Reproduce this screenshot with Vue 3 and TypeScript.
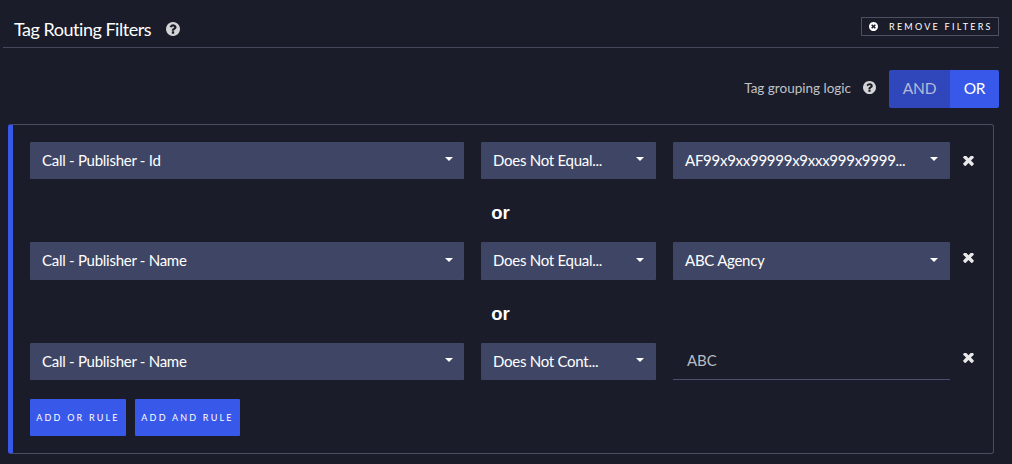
<script setup lang="ts">
interface Rule {
  field: string
  op: string
  value: string
  isInput?: boolean
  removeClass: string
}

const rules: Rule[] = [
  { field: 'Call - Publisher - Id', op: 'Does Not Equal...', value: 'AF99x9xx99999x9xxx999x9999...', removeClass: 'low' },
  { field: 'Call - Publisher - Name', op: 'Does Not Equal...', value: 'ABC Agency', removeClass: 'high' },
  { field: 'Call - Publisher - Name', op: 'Does Not Cont...', value: 'ABC', isInput: true, removeClass: 'high' },
]

const helpPath =
  'M1024 1376v-192q0-14-9-23t-23-9h-192q-14 0-23 9t-9 23v192q0 14 9 23t23 9h192q14 0 23-9t9-23zm256-672q0-88-55.5-163t-138.5-116-170-41q-243 0-371 213-15 24 8 42l132 100q7 6 19 6 16 0 25-12 53-68 86-92 34-24 86-24 48 0 85.5 26t37.5 59q0 38-20 61t-68 45q-63 28-115.5 86.5t-52.5 125.5v36q0 14 9 23t23 9h192q14 0 23-9t9-23q0-19 21.5-49.5t54.5-49.5q32-18 49-28.5t46-35 44.5-48 28-60.5 12.5-81zm384 192q0 209-103 385.5t-279.5 279.5-385.5 103-385.5-103-279.5-279.5-103-385.5 103-385.5 279.5-279.5 385.5-103 385.5 103 279.5 279.5 103 385.5z'
const timesPath =
  'M1298 1214q0 40-28 68l-136 136q-28 28-68 28t-68-28l-294-294-294 294q-28 28-68 28t-68-28l-136-136q-28-28-28-68t28-68l294-294-294-294q-28-28-28-68t28-68l136-136q28-28 68-28t68 28l294 294 294-294q28-28 68-28t68 28l136 136q28 28 28 68t-28 68l-294 294 294 294q28 28 28 68z'
const timesCirclePath =
  'M1149 1122q0-26-19-45l-181-181 181-181q19-19 19-45 0-27-19-46l-90-90q-19-19-46-19-26 0-45 19l-181 181-181-181q-19-19-45-19-27 0-46 19l-90 90q-19 19-19 46 0 26 19 45l181 181-181 181q-19 19-19 45 0 27 19 46l90 90q19 19 46 19 26 0 45-19l181-181 181 181q19 19 45 19 27 0 46-19l90-90q19-19 19-46zm387-226q0 209-103 385.5t-279.5 279.5-385.5 103-385.5-103-279.5-279.5-103-385.5 103-385.5 279.5-279.5 385.5-103 385.5 103 279.5 279.5 103 385.5z'
</script>

<template>
  <div class="page">
    <header class="head">
      <div class="title-wrap">
        <h1 class="title">Tag Routing Filters</h1>
        <svg class="help help-lg" viewBox="128 128 1536 1536" aria-hidden="true"><path :d="helpPath" /></svg>
      </div>
      <button class="remove-all" type="button">
        <svg class="remove-icon" viewBox="0 128 1536 1536" aria-hidden="true"><path :d="timesCirclePath" /></svg>
        <span>REMOVE FILTERS</span>
      </button>
    </header>

    <div class="logic">
      <span class="logic-label">Tag grouping logic</span>
      <svg class="help help-sm" viewBox="128 128 1536 1536" aria-hidden="true"><path :d="helpPath" /></svg>
      <div class="toggle">
        <button class="toggle-btn and" type="button">AND</button>
        <button class="toggle-btn or" type="button">OR</button>
      </div>
    </div>

    <section class="card">
      <template v-for="(rule, i) in rules" :key="i">
        <div v-if="i > 0" class="joiner">or</div>
        <div class="rule">
          <div class="select field">
            <span class="select-text">{{ rule.field }}</span><i class="caret"></i>
          </div>
          <div class="select op">
            <span class="select-text">{{ rule.op }}</span><i class="caret"></i>
          </div>
          <div v-if="rule.isInput" class="text-input">{{ rule.value }}</div>
          <div v-else class="select value">
            <span class="select-text">{{ rule.value }}</span><i class="caret"></i>
          </div>
          <svg class="times" :class="rule.removeClass" viewBox="100 340 1208 1112" aria-hidden="true"><path :d="timesPath" /></svg>
        </div>
      </template>
      <div class="actions">
        <button class="add add-or" type="button">ADD OR RULE</button>
        <button class="add add-and" type="button">ADD AND RULE</button>
      </div>
    </section>
  </div>
</template>

<style>
html, body { margin: 0; background: #1a1c29; }
</style>

<style scoped>
.page {
  box-sizing: border-box;
  width: 1012px;
  height: 464px;
  padding: 0 13px 0 3px;
  background: #1a1c29;
  font-family: Lato, "Open Sans", sans-serif;
  color: #fff;
  overflow: hidden;
}
.head {
  box-sizing: border-box;
  height: 48px;
  display: flex;
  align-items: flex-start;
  justify-content: space-between;
  border-bottom: 1px solid #45485a;
}
.title-wrap {
  display: flex;
  align-items: center;
  height: 20px;
  margin-top: 19px;
  padding-left: 11px;
}
.title {
  margin: 0;
  font-size: 18px;
  font-weight: 400;
  line-height: 20px;
  letter-spacing: -0.48px;
}
.help { fill: #d4d4d6; display: block; }
.help-lg { width: 14px; height: 14px; margin-left: 15px; }
.help-sm { width: 13px; height: 13px; margin-left: 12px; margin-top: -3px; }
.remove-all {
  box-sizing: border-box;
  width: 138px;
  height: 19px;
  margin-top: 17px;
  padding: 0 0 0 7px;
  display: flex;
  align-items: center;
  background: transparent;
  border: 1px solid #4d5060;
  color: #fff;
  font: 400 9px/1 Lato, sans-serif;
  letter-spacing: 2.25px;
}
.remove-icon { width: 9px; height: 9px; fill: #fff; margin-right: 11px; }
.logic {
  height: 38px;
  margin-top: 22px;
  display: flex;
  align-items: center;
  justify-content: flex-end;
}
.logic-label {
  font-size: 13.5px;
  color: #c1c2c7;
  margin-top: -3px;
}
.toggle {
  display: flex;
  margin-left: 13px;
  height: 38px;
  border-radius: 2px;
  overflow: hidden;
}
.toggle-btn {
  border: 0;
  padding: 0;
  height: 38px;
  font: 400 15.5px/1 Lato, sans-serif;
  letter-spacing: -0.2px;
}
.and { width: 61px; background: #2f47bb; color: #b4b9d8; }
.or { width: 49px; background: #3858e9; color: #fff; }
.card {
  box-sizing: border-box;
  width: 986px;
  height: 330px;
  margin: 16px 0 0 5px;
  padding: 16.6px 0 0 17px;
  border: 1px solid #4a4d5c;
  border-left: 5px solid #3858e9;
  border-radius: 3px;
}
.rule {
  display: flex;
  height: 37.5px;
  gap: 17px;
  align-items: stretch;
}
.select {
  box-sizing: border-box;
  display: flex;
  align-items: center;
  justify-content: space-between;
  padding: 0 12px;
  background: #3f4665;
  border-radius: 1px;
  font-size: 15px;
}
.select-text { white-space: nowrap; margin-top: -1px; letter-spacing: -0.27px; }
.field { width: 434px; padding-right: 11px; }
.op { width: 175px; }
.value { width: 277px; }
.caret {
  width: 0;
  height: 0;
  border-left: 4.5px solid transparent;
  border-right: 4.5px solid transparent;
  border-top: 4.5px solid #fff;
  margin-top: -2px;
}
.text-input {
  box-sizing: border-box;
  width: 277px;
  padding: 0 14px;
  line-height: 35px;
  font-size: 15px;
  letter-spacing: -0.1px;
  color: #b8bac4;
  border-bottom: 1px solid #4a4f70;
}
.times {
  fill: #e8e8ea;
  width: 11px;
  height: 10px;
  align-self: flex-start;
  margin-left: -4.5px;
}
.times.low { margin-top: 14.5px; }
.times.high { margin-top: 10.5px; }
.joiner {
  box-sizing: border-box;
  height: 63px;
  display: flex;
  align-items: center;
  justify-content: center;
  padding: 6px 22px 0 0;
  font: 700 18.5px/1 "Liberation Sans", sans-serif;
}
.actions {
  display: flex;
  gap: 9px;
  margin-top: 19px;
}
.add {
  box-sizing: border-box;
  height: 37px;
  padding: 0;
  background: #3858e9;
  border: 0;
  border-radius: 1px;
  color: #fff;
  font: 400 9px/1 Lato, sans-serif;
  letter-spacing: 2.2px;
}
.add-or { width: 96px; }
.add-and { width: 105px; }
</style>
